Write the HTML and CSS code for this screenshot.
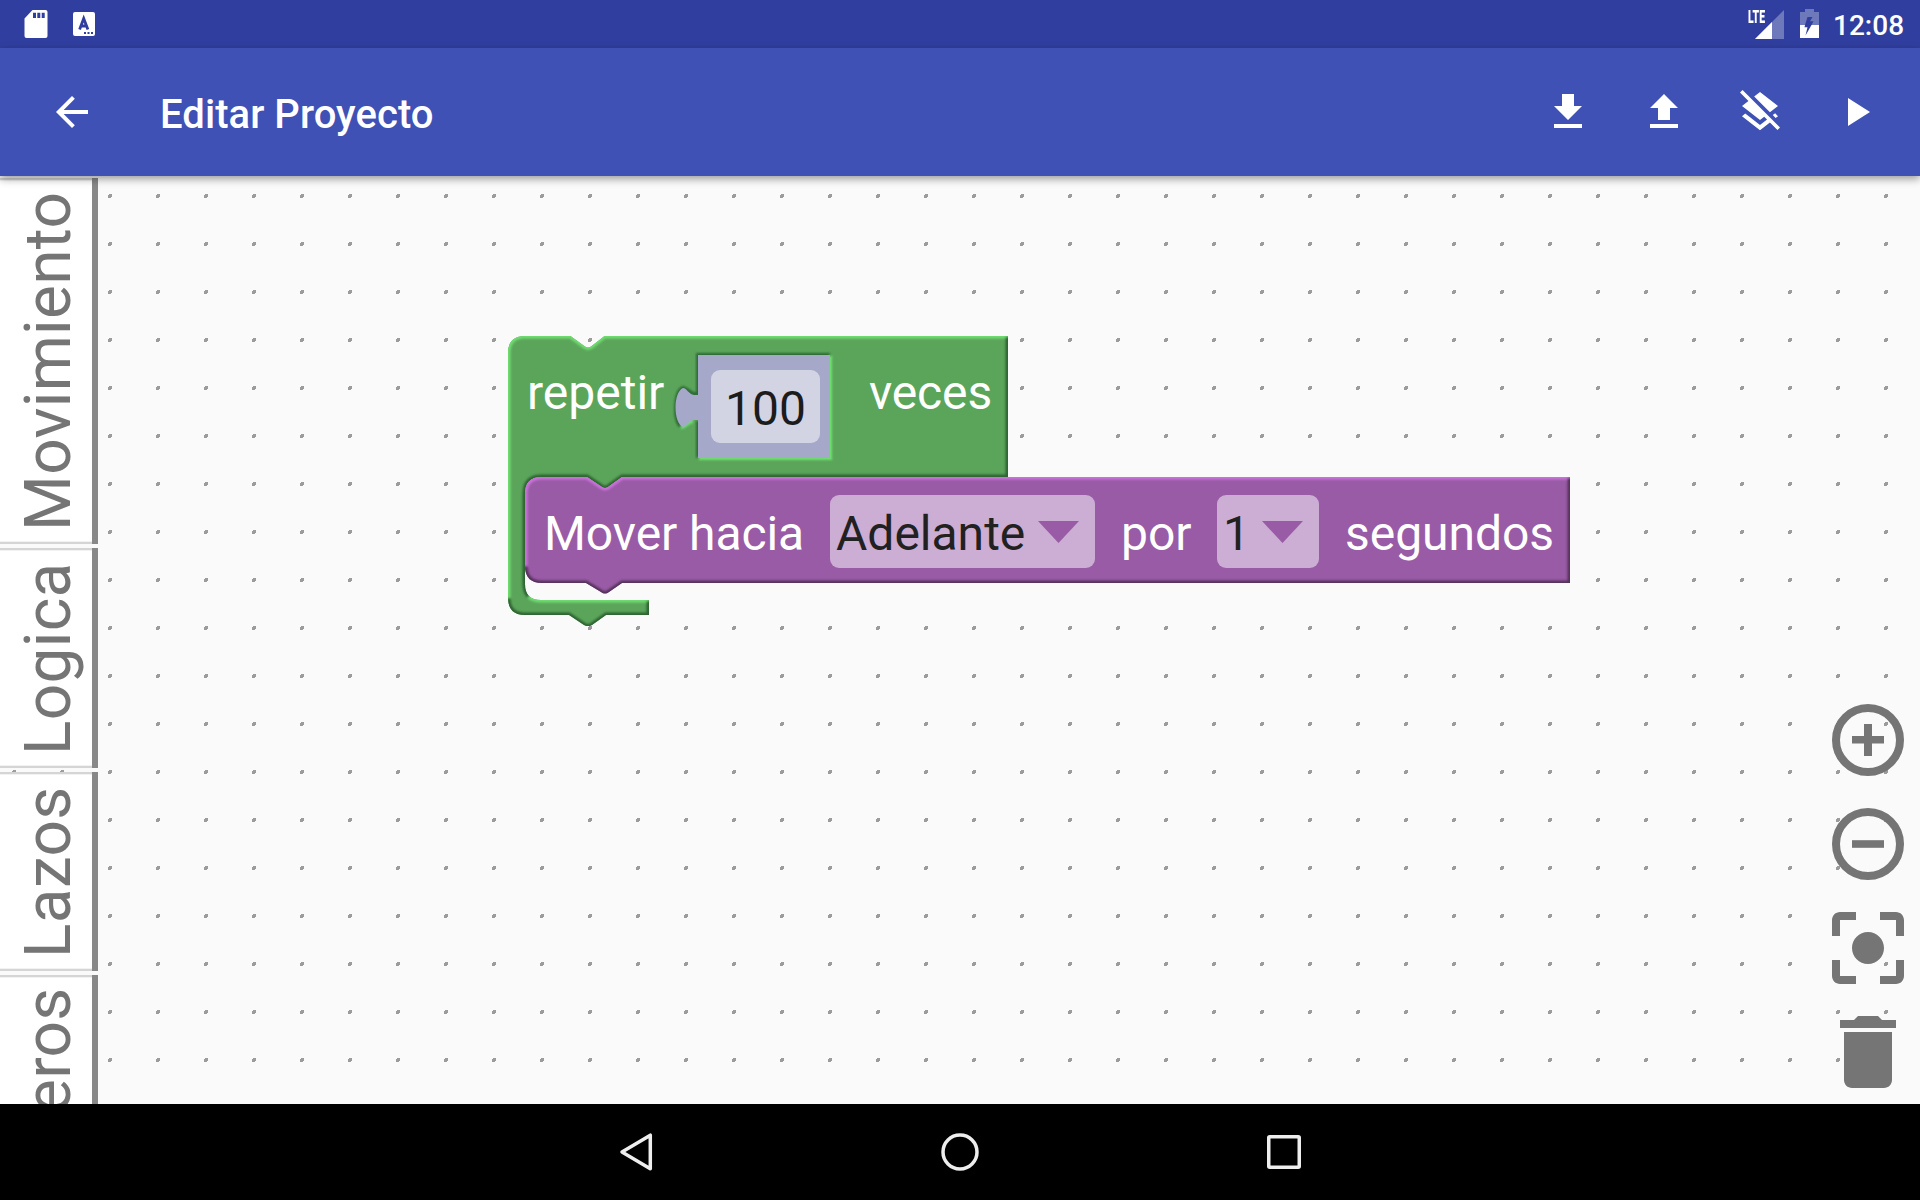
FILE: index.html
```html
<!DOCTYPE html>
<html lang="es">
<head>
<meta charset="utf-8">
<title>Editar Proyecto</title>
<link rel="stylesheet" href="styles.css">
</head>
<body>
<div class="screen">
  <header class="status-bar">
    <div class="status-group">
      <svg class="sd-icon" viewBox="0 0 24 28" width="24" height="28"><path fill="#fff" fill-rule="evenodd" d="M8.500 0H21.500Q23.500 0 23.500 2V26Q23.500 28 21.500 28H2.500Q.500 28 .500 26V8.500ZM9 2.700V8h3V2.700ZM13.300 2.700V8h3V2.700ZM17.700 2.700V8h3V2.700Z"/></svg>
      <svg class="keyboard-icon" viewBox="0 0 22 24" width="22" height="24"><rect width="22" height="24" rx="2" fill="#fff"/><path fill="none" stroke="#303f9f" stroke-width="2.800" d="M6.600 17.500L10.700 6.500L14.900 17.500M8 14H13.500"/><path fill="#303f9f" d="M11 20h2v2h-2zM14.500 20h2v2h-2zM18 20h2v2h-2z"/></svg>
    </div>
    <div class="status-group">
      <div class="signal">
        <span class="lte">LTE</span>
        <svg viewBox="0 0 29 29" width="29" height="29"><path fill="#fff" fill-opacity=".3" d="M0 29L29 0V29Z"/><path fill="#fff" d="M0 29L17 12V29Z"/></svg>
      </div>
      <svg class="battery" viewBox="0 0 19 29" width="19" height="29"><path fill="#fff" fill-opacity=".3" fill-rule="evenodd" d="M5 0H14V3H19V16H0V3H5ZM7.500 8L5 16H11.500L13.500 12.300H10L12.500 8Z"/><path fill="#fff" fill-rule="evenodd" d="M0 16H19V29H0ZM5 16L4.500 18.200H7.500L5.500 26.500L11.500 16Z"/></svg>
      <span class="clock">12:08</span>
    </div>
  </header>

  <div class="app-bar">
    <svg class="icon" viewBox="0 0 24 24"><path d="M20 11H7.830l5.590-5.590L12 4l-8 8 8 8 1.410-1.410L7.830 13H20v-2z"/></svg>
    <h1 class="title">Editar Proyecto</h1>
    <nav class="actions">
      <svg class="icon" viewBox="0 0 24 24"><path d="M19 9h-4V3H9v6H5l7 7 7-7zM5 18v2h14v-2H5z"/></svg>
      <svg class="icon" viewBox="0 0 24 24"><path d="M9 16h6v-6h4l-7-7-7 7h4zm-4 2h14v2H5z"/></svg>
      <svg class="icon" viewBox="0 0 24 24"><path d="M19.810 14.990l1.190-.92-1.430-1.430-1.190.92 1.430 1.430zm-.45-4.720L21 9l-9-7-2.910 2.270 7.870 7.880 2.400-1.880zM3.270 1L2 2.270l4.220 4.220L3 9l1.630 1.270L12 16l2.100-1.630 1.430 1.430L12 18.540l-7.370-5.730L3 14.070l9 7 4.950-3.850L20.730 21 22 19.730 3.270 1z"/></svg>
      <svg class="icon" viewBox="0 0 24 24"><path d="M8 5v14l11-7z"/></svg>
    </nav>
  </div>

  <main class="workspace">
    <svg class="grid" width="1920" height="928">
      <defs><pattern id="dots" width="48" height="48" patternUnits="userSpaceOnUse"><path fill="#9c9c9c" shape-rendering="crispEdges" d="M13 18h3v3h-1v1h-3v-3h1z"/></pattern></defs>
      <rect width="1920" height="928" fill="url(#dots)"/>
    </svg>

    <aside class="toolbox">
      <div class="tab tab-movimiento"><span>Movimiento</span></div>
      <div class="tab tab-logica"><span>Logica</span></div>
      <div class="tab tab-lazos"><span>Lazos</span></div>
      <div class="tab tab-numeros"><span>Numeros</span></div>
    </aside>

    <section class="block loop">
      <svg class="shape" viewBox="508 336 500 290" width="500" height="290">
        <defs>
          <path id="loop-path" d="M508 353Q508 336 525 336H570.500L585 346.500Q588 348.500 591 346.500L604.500 336H1008V477H622L608 487Q605 489 602 487L587 477H541Q525 477 525 494V584Q525 600 541 600H649V615H606L592 625Q588 627.500 584 625L569 615H525Q508 615 508 598Z"/>
          <clipPath id="loop-clip"><use href="#loop-path"/></clipPath>
          <filter id="soft" x="-5%" y="-5%" width="110%" height="110%"><feGaussianBlur stdDeviation="0.9"/></filter>
        </defs>
        <use href="#loop-path" fill="#5ba55b"/>
        <g clip-path="url(#loop-clip)" fill="none" stroke-width="5">
          <g filter="url(#soft)">
            <path stroke="#70dc70" d="M508 598V353Q508 336 525 336H570.500L585 346.500Q588 348.500 591 346.500L604.500 336H1008M529 596Q533 600 541 600H649"/>
            <path stroke="#2f6430" d="M1008 337V477H622L608 487Q605 489 602 487L587 477H541Q525 477 525 494V584Q525 592 529 596M649 601V615H606L592 625Q588 627.500 584 625L569 615H525Q508 615 508 598"/>
          </g>
        </g>
        <g fill="none" stroke-width="4" filter="url(#soft)">
          <path stroke="#2f6a34" d="M830 355H698V394H694C688 392 686 388 683 388C674 392 674 423 681 426M698 421V458"/>
          <path stroke="#70e070" d="M830 356V458H699M681 427C685 427 688 421 693 421"/>
        </g>
        <path fill="#a5a8c8" d="M698 355H830V458H698V420H694C688 421 686 427 683 427C673 423 673 392 683 388C687 388 688 394 694 395H698Z"/>
      </svg>
      <div class="row loop-row">
        <span class="label repetir">repetir</span>
        <div class="number-input"><span class="field">100</span></div>
        <span class="label veces">veces</span>
      </div>
    </section>

    <section class="block move">
      <svg class="shape" viewBox="525 477 1045 117" width="1045" height="117">
        <defs>
          <path id="move-path" d="M525 494Q525 477 542 477H587L602 487Q605 489 608 487L622 477H1570V583H622L609 592Q605 595 601 592L586 583H542Q525 583 525 566Z"/>
          <clipPath id="move-clip"><use href="#move-path"/></clipPath>
        </defs>
        <use href="#move-path" fill="#995ba5"/>
        <g clip-path="url(#move-clip)" fill="none" stroke-width="5">
          <g filter="url(#soft)">
            <path stroke="#ca72dc" d="M525 566V494Q525 477 542 477H587L602 487Q605 489 608 487L622 477H1570"/>
            <path stroke="#55305c" d="M1570 478V583H622L609 592Q605 595 601 592L586 583H542Q525 583 525 566"/>
          </g>
        </g>
      </svg>
      <div class="row move-row">
        <span class="label mover">Mover hacia</span>
        <div class="dropdown direction"><span>Adelante</span><svg viewBox="0 0 41 22" width="41" height="22"><path d="M0 0H41L20.500 22Z"/></svg></div>
        <span class="label por">por</span>
        <div class="dropdown seconds"><span>1</span><svg viewBox="0 0 41 22" width="41" height="22"><path d="M0 0H41L20.500 22Z"/></svg></div>
        <span class="label segundos">segundos</span>
      </div>
    </section>

    <div class="controls">
      <svg viewBox="0 0 72 72"><circle cx="36" cy="36" r="32" fill="none" stroke="#757575" stroke-width="8"/><path d="M32 20h8v12h12v7.500H40V52h-8V39.500H20V32h12z"/></svg>
      <svg viewBox="0 0 72 72"><circle cx="36" cy="36" r="32" fill="none" stroke="#757575" stroke-width="8"/><path d="M20 32.200h32v7.600H20z"/></svg>
      <svg viewBox="3 3 18 18"><path d="M12 8c-2.210 0-4 1.790-4 4s1.790 4 4 4 4-1.790 4-4-1.790-4-4-4zm-7 7H3v4c0 1.100.9 2 2 2h4v-2H5v-4zM5 5h4V3H5c-1.100 0-2 .9-2 2v4h2V5zm14-2h-4v2h4v4h2V5c0-1.100-.9-2-2-2zm0 16h-4v2h4c1.100 0 2-.9 2-2v-4h-2v4z"/></svg>
      <svg viewBox="3 3 18 18"><path d="M6 19c0 1.100.9 2 2 2h8c1.100 0 2-.9 2-2V7H6v12zM19 4h-3.500l-1-1h-5l-1 1H5v2h14V4z"/></svg>
    </div>
  </main>

  <footer class="nav-bar">
    <svg viewBox="0 0 40 40"><path d="M34.300 3.200V36.800L6 20Z"/></svg>
    <svg viewBox="0 0 40 40"><circle cx="20" cy="20" r="17"/></svg>
    <svg viewBox="0 0 40 40"><rect x="4.750" y="4.750" width="30.500" height="30.500" rx="1"/></svg>
  </footer>
</div>
</body>
</html>
```
FILE: styles.css
```css
* { box-sizing: border-box; }

body {
  margin: 0;
  font-family: Roboto, sans-serif;
  background: #000;
}

svg { display: block; flex: none; }

.screen {
  width: 1920px;
  height: 1200px;
  display: flex;
  flex-direction: column;
  overflow: hidden;
}

.status-bar {
  height: 48px;
  flex: none;
  display: flex;
  justify-content: space-between;
  background: #303f9f;
  color: #fff;
}

.status-group { display: flex; }
.sd-icon { margin: 10px 0 0 24px; }
.keyboard-icon { margin: 12px 0 0 25px; }

.signal { display: flex; margin-top: 10px; }

.lte {
  width: 7px;
  font-size: 18px;
  line-height: 14px;
  font-weight: 900;
  transform: scaleX(.58);
  transform-origin: left;
}

.battery { margin: 9px 0 0 16px; }

.clock {
  margin-left: 14px;
  width: 87px;
  font-size: 28px;
  line-height: 51px;
  font-weight: 500;
}

.app-bar {
  position: relative;
  z-index: 2;
  height: 128px;
  flex: none;
  display: flex;
  align-items: center;
  padding: 0 40px 0 48px;
  background: #3f51b5;
  box-shadow: 0 3px 8px rgba(0, 0, 0, .38);
}

.icon { width: 48px; height: 48px; fill: #fff; }

.title {
  margin: 6px 0 0 64px;
  color: #fff;
  font-size: 40px;
  line-height: 48px;
  font-weight: 500;
  letter-spacing: .06px;
}

.actions { display: flex; gap: 48px; margin-left: auto; }

.workspace {
  position: relative;
  height: 928px;
  flex: none;
  background: #fafafa;
  overflow: hidden;
}

.grid { position: absolute; inset: 0; }

.toolbox {
  position: relative;
  width: 98px;
  padding-top: 2px;
  display: flex;
  flex-direction: column;
  gap: 4px;
}

.tab {
  display: flex;
  justify-content: flex-end;
  padding-right: 6px;
  color: #757575;
  font-size: 64px;
  line-height: 86px;
  letter-spacing: .3px;
  background:
    linear-gradient(#888, #888) right / 6px 100% no-repeat,
    linear-gradient(#d5d5d5 2px, #f2f2f2 2px) top / 100% 3px no-repeat,
    linear-gradient(#f2f2f2 1px, #d5d5d5 1px) bottom / 100% 3px no-repeat,
    #fff;
}

.tab span {
  writing-mode: vertical-rl;
  transform: rotate(180deg);
  padding: 13px 0;
  white-space: nowrap;
}

.tab-movimiento { height: 366px; }
.tab-logica { height: 220px; }
.tab-lazos { height: 199px; }
.tab-numeros { height: 289px; }

.block { position: absolute; }
.loop { left: 508px; top: 160px; width: 500px; height: 290px; }
.move { left: 525px; top: 301px; width: 1045px; height: 117px; }
.shape { position: absolute; inset: 0; }

.row {
  position: relative;
  display: flex;
  font-size: 48px;
  line-height: 56px;
  white-space: nowrap;
}

.label { color: #fff; }

.loop-row { padding: 19px 0 0 19px; height: 141px; }
.repetir { width: 149px; padding-top: 10px; }
.veces { padding: 10px 0 0 39px; letter-spacing: -.15px; }
.number-input { width: 154px; height: 103px; padding: 15px 10px 15px 35px; }

.field {
  display: block;
  height: 73px;
  line-height: 77px;
  border-radius: 9px;
  background: #d2d4e3;
  color: #1c1c1c;
  text-align: center;
}

.move-row { padding: 18px 0 0 19px; line-height: 78px; }
.mover { width: 286px; letter-spacing: -.08px; }
.por { width: 122px; padding-left: 26px; }
.segundos { padding-left: 26px; letter-spacing: -.05px; }

.dropdown {
  height: 73px;
  display: flex;
  justify-content: space-between;
  padding: 0 16px 0 6px;
  border-radius: 9px;
  background: #ccadd4;
  color: #212121;
}

.dropdown svg { margin-top: 26px; fill: #995ba5; }
.direction { width: 265px; }
.seconds { width: 102px; }

.controls {
  position: absolute;
  right: 16px;
  bottom: 16px;
  display: flex;
  flex-direction: column;
  gap: 32px;
}

.controls svg { width: 72px; height: 72px; fill: #757575; }

.nav-bar {
  height: 96px;
  flex: none;
  display: flex;
  align-items: center;
  justify-content: center;
  gap: 284px;
  background: #000;
}

.nav-bar svg {
  width: 40px;
  height: 40px;
  fill: none;
  stroke: #eee;
  stroke-width: 3.500px;
  stroke-linejoin: round;
}
```
